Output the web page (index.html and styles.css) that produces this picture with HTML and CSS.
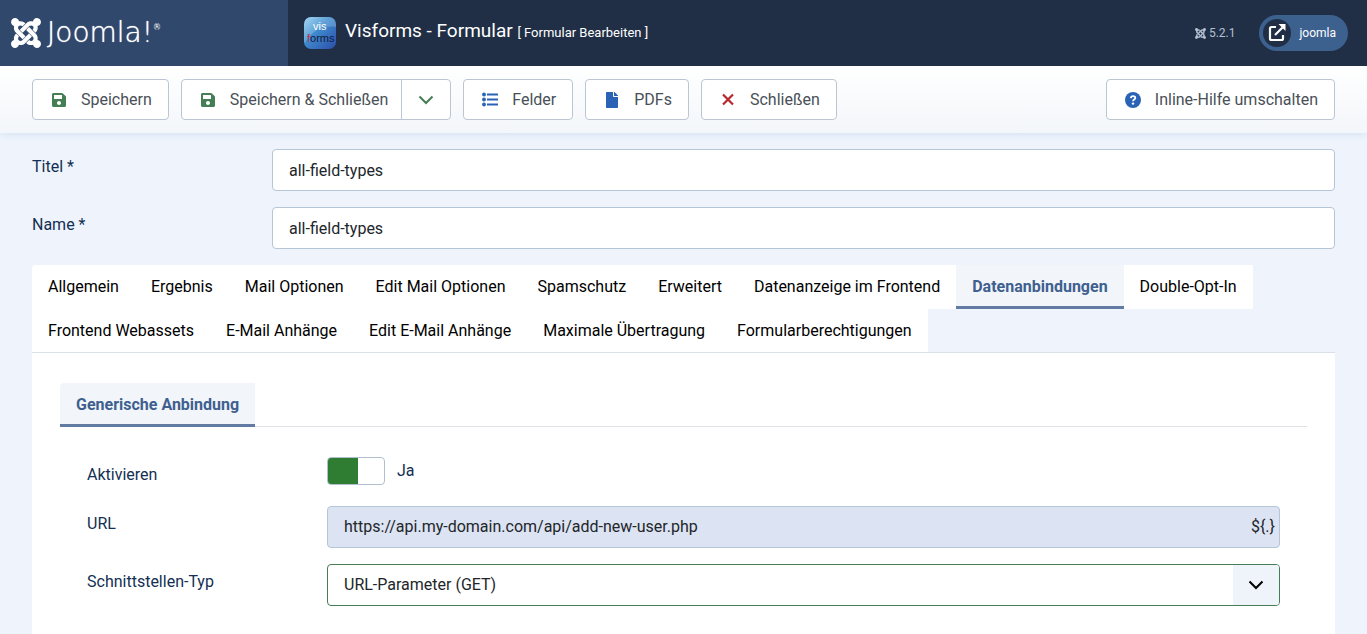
FILE: index.html
```html
<!DOCTYPE html>
<html lang="de">
<head>
<meta charset="utf-8">
<meta name="viewport" content="width=device-width, initial-scale=1">
<title>Visforms - Formular</title>
<link rel="stylesheet" href="styles.css">
</head>
<body>
<svg class="sprite" aria-hidden="true">
  <symbol id="joomla" viewBox="0 32 448 448"><path d="M.6 92.1C.6 58.8 27.4 32 60.4 32c30 0 54.5 21.9 59.2 50.2 32.6-7.6 67.1.6 96.5 30l-44.3 44.3c-20.5-20.5-42.6-16.3-55.4-3.5-14.3 14.3-14.3 37.9 0 52.2l99.5 99.5-44 44.3c-87.7-87.2-49.7-49.7-99.8-99.7-26.8-26.5-35-64.8-24.8-98.9C20.4 144.6.6 120.7.6 92.1zm129.5 116.4l44.3 44.3c10-10 89.7-89.7 99.7-99.8 14.3-14.3 37.6-14.3 51.9 0 12.8 12.8 17 35-3.5 55.4l44 44.3c31.2-31.2 38.5-67.6 28.9-101.2 29.2-4.1 51.9-29.2 51.9-59.5 0-33.2-26.8-60.1-59.8-60.1-30.3 0-55.4 22.5-59.5 51.6-33.8-9.9-71.7-1.5-98.3 25.1-18.3 19.1-71.1 71.5-99.6 99.9zm266.3 152.2c8.2-32.7-.9-68.5-26.3-93.9-11.8-12.2 5 4.7-99.5-99.7l-44.3 44.3 99.7 99.7c14.3 14.3 14.3 37.6 0 51.9-12.8 12.8-35 17-55.4-3.5l-44 44.3c27.6 30.2 68 38.8 102.7 28 5.5 27.4 29.7 48.1 58.9 48.1 33 0 59.8-26.8 59.8-60.1 0-30.2-22.5-55-51.6-59.1zm-84.3-53.1l-44-44.3c-87 86.4-50.4 50.4-99.7 99.8-14.3 14.3-37.6 14.3-51.9 0-13.1-13.4-16.9-35.3 3.2-55.4l-44-44.3c-30.2 30.2-38 65.2-29.5 98.3-26.7 6-46.2 29.9-46.2 58.2C0 453.2 26.8 480 59.8 480c28.6 0 52.5-19.8 58.6-46.7 32.7 8.2 68.5-.6 94.2-26 32.1-32 12.2-12.4 99.5-99.7z"/></symbol>
  <symbol id="save" viewBox="0 0 448 512"><path d="M433.941 129.941l-83.882-83.882A48 48 0 0 0 316.118 32H48C21.49 32 0 53.49 0 80v352c0 26.51 21.49 48 48 48h352c26.51 0 48-21.49 48-48V163.882a48 48 0 0 0-14.059-33.941zM224 416c-35.346 0-64-28.654-64-64 0-35.346 28.654-64 64-64s64 28.654 64 64c0 35.346-28.654 64-64 64zm96-304.52V212c0 6.627-5.373 12-12 12H76c-6.627 0-12-5.373-12-12V108c0-6.627 5.373-12 12-12h228.52c3.183 0 6.235 1.264 8.485 3.515l3.48 3.48A11.996 11.996 0 0 1 320 111.48z"/></symbol>
  <symbol id="chevron" viewBox="0 0 16 16"><path d="M1.500 4.500 8 11l6.500-6.500" fill="none" stroke="currentColor" stroke-width="2"/></symbol>
</svg>

<header class="header">
  <a class="brand" href="#" aria-label="Joomla!">
    <svg class="brand-mark"><use href="#joomla"/></svg>
    <span class="brand-name">Joomla!<sup>®</sup></span>
  </a>
  <div class="header-main">
    <svg class="app-icon" viewBox="0 0 32 32" aria-hidden="true">
      <defs>
        <linearGradient id="app-bg" x1="0" y1="0" x2="1" y2="1"><stop offset="0" stop-color="#8fcdf0"/><stop offset=".4" stop-color="#3f8dd0"/><stop offset="1" stop-color="#2c4da8"/></linearGradient>
      </defs>
      <rect width="32" height="32" rx="7" fill="url(#app-bg)"/>
      <path d="M7 0h18a7 7 0 0 1 7 7v3C20 8 8 13 1 26L0 24V7a7 7 0 0 1 7-7z" fill="#fff" opacity=".18"/>
      <text class="app-text" x="9" y="13" fill="#fff">vis</text>
      <text class="app-text" x="3" y="25" fill="#101a3a"><tspan fill="#c8283c">f</tspan>orms</text>
    </svg>
    <h1 class="title">Visforms - Formular <small>[ Formular Bearbeiten ]</small></h1>
    <div class="version"><svg class="version-icon" aria-hidden="true"><use href="#joomla"/></svg>5.2.1</div>
    <a class="site-link" href="#">
      <span class="site-icon"><svg viewBox="0 0 18 18" aria-hidden="true"><path d="M8 3H3.500Q2 3 2 4.500v10Q2 16 3.500 16h10q1.500 0 1.500-1.500V11M7 11l7.500-7.500" fill="none" stroke="#fff" stroke-width="2.200"/><path d="M10.500 0H17.500V7z" fill="#fff"/></svg></span>
      joomla
    </a>
  </div>
</header>

<div class="toolbar">
  <button class="btn green" type="button"><svg class="icon"><use href="#save"/></svg><span>Speichern</span></button>
  <div class="btn-group">
    <button class="btn green" type="button"><svg class="icon"><use href="#save"/></svg><span>Speichern &amp; Schließen</span></button>
    <button class="btn btn-toggle green" type="button" aria-label="Weitere Aktionen"><svg class="icon"><use href="#chevron"/></svg></button>
  </div>
  <button class="btn blue" type="button"><svg class="icon" viewBox="0 0 16 16"><g fill="currentColor"><circle cx="2" cy="2.500" r="1.900"/><circle cx="2" cy="7.500" r="1.900"/><circle cx="2" cy="12.500" r="1.900"/><path d="M5 1.500h11v2H5zM5 6.500h11v2H5zM5 11.500h11v2H5z"/></g></svg><span>Felder</span></button>
  <button class="btn blue" type="button"><svg class="icon" viewBox="0 0 384 512"><path d="M224 136V0H24C10.700 0 0 10.700 0 24v464c0 13.300 10.700 24 24 24h336c13.300 0 24-10.700 24-24V160H248c-13.200 0-24-10.800-24-24zm160-14.100v6.100H256V0h6.100c6.400 0 12.500 2.500 17 7l97.900 98c4.500 4.500 7 10.600 7 16.900z"/></svg><span>PDFs</span></button>
  <button class="btn red" type="button"><svg class="icon" viewBox="0 0 16 16"><path d="m3 2.500 10 10m0-10-10 10" stroke="currentColor" stroke-width="2.200"/></svg><span>Schließen</span></button>
  <button class="btn blue btn-help" type="button"><svg class="icon" viewBox="0 0 16 16"><circle cx="8" cy="8" r="8"/><path d="M5.800 6.100C6 4.700 6.900 4.200 8 4.200c1.300 0 2.300.7 2.300 1.800C10.300 7.500 8 7.600 8 9.300" fill="none" stroke="#fff" stroke-width="1.800"/><circle cx="8" cy="11.600" r="1.200" fill="#fff"/></svg><span>Inline-Hilfe umschalten</span></button>
</div>

<main class="content">
  <form>
    <div class="row"><label for="title">Titel *</label><input class="control" id="title" type="text" value="all-field-types"></div>
    <div class="row"><label for="name">Name *</label><input class="control" id="name" type="text" value="all-field-types"></div>

    <div class="tabs" role="tablist">
      <button class="tab" type="button" role="tab">Allgemein</button>
      <button class="tab" type="button" role="tab">Ergebnis</button>
      <button class="tab" type="button" role="tab">Mail Optionen</button>
      <button class="tab" type="button" role="tab">Edit Mail Optionen</button>
      <button class="tab" type="button" role="tab">Spamschutz</button>
      <button class="tab" type="button" role="tab">Erweitert</button>
      <button class="tab" type="button" role="tab">Datenanzeige im Frontend</button>
      <button class="tab active" type="button" role="tab" aria-selected="true">Datenanbindungen</button>
      <button class="tab" type="button" role="tab">Double-Opt-In</button>
      <button class="tab" type="button" role="tab">Frontend Webassets</button>
      <button class="tab" type="button" role="tab">E-Mail Anhänge</button>
      <button class="tab" type="button" role="tab">Edit E-Mail Anhänge</button>
      <button class="tab" type="button" role="tab">Maximale Übertragung</button>
      <button class="tab" type="button" role="tab">Formularberechtigungen</button>
    </div>

    <div class="panel">
      <div class="tabs" role="tablist">
        <button class="tab active" type="button" role="tab" aria-selected="true">Generische Anbindung</button>
      </div>
      <div class="subpanel">
        <div class="row row-switch">
          <label for="enable">Aktivieren</label>
          <div class="switch-wrap"><input class="switch" id="enable" type="checkbox" role="switch" checked><span>Ja</span></div>
        </div>
        <div class="row">
          <label for="url">URL</label>
          <div class="control readonly"><input id="url" type="text" value="https://api.my-domain.com/api/add-new-user.php" readonly><span>${.}</span></div>
        </div>
        <div class="row">
          <label for="type">Schnittstellen-Typ</label>
          <div class="select-wrap">
            <select class="control select" id="type"><option>URL-Parameter (GET)</option></select>
            <span class="select-arrow"><svg class="icon"><use href="#chevron"/></svg></span>
          </div>
        </div>
      </div>
    </div>
  </form>
</main>
</body>
</html>
```
FILE: styles.css
```css
* { box-sizing: border-box; }

body {
  margin: 0;
  background: #eff4fc;
  color: #132f53;
  font: 16px/24px Roboto, "Liberation Sans", sans-serif;
}

button, input, select { font: inherit; }
.sprite { display: none; }

/* Header */
.header { position: relative; display: flex; min-height: 66px; background: #202f45; color: #fff; }
.brand {
  display: flex;
  flex: 0 0 288px;
  align-items: center;
  gap: 6px;
  padding-left: 11px;
  background: #2f486b;
  color: #fff;
  text-decoration: none;
}
.brand-mark { width: 30px; height: 30px; fill: currentColor; }
.brand-name {
  font: 200 28px/32px "DejaVu Sans Light", "DejaVu Sans", sans-serif;
  text-shadow: 0 0 1px #fff;
}
.brand-name sup { font-size: 8px; line-height: 8px; vertical-align: 12px; }
.header-main { display: flex; flex: 1; align-items: center; padding: 0 19px 0 16px; }
.app-icon { width: 32px; height: 32px; margin-right: 9px; }
.app-text { font: 11px "Liberation Sans", sans-serif; }
.title { flex: 1; margin: 0; padding-bottom: 2px; font-size: 19px; font-weight: 400; line-height: 24px; }
.title small { font-size: 13px; }
.version {
  display: flex;
  align-items: center;
  gap: 3px;
  margin-right: 24px;
  color: #b3c0d2;
  font-size: 12px;
}
.version-icon { width: 11px; height: 11px; fill: currentColor; }
.site-link {
  display: flex;
  align-items: center;
  gap: 8px;
  padding: 4px 12px 4px 4px;
  border-radius: 18px;
  background: #3d618f;
  color: #fff;
  font-size: 12px;
  text-decoration: none;
}
.site-icon {
  display: grid;
  place-items: center;
  width: 28px;
  height: 28px;
  border-radius: 50%;
  background: #202f45;
}
.site-icon svg { width: 18px; height: 18px; }

/* Toolbar */
.toolbar {
  display: flex;
  flex-wrap: wrap;
  gap: 12px;
  padding: 13px 32px;
  background: linear-gradient(#fff, #f3f6fa);
  box-shadow: 0 1px 8px #d3dfef;
}
.btn {
  display: flex;
  align-items: center;
  gap: 14px;
  min-height: 41px;
  padding: 0 16px 0 18px;
  border: 1px solid #bcc6d3;
  border-radius: 4px;
  background: #fff;
  color: #495057;
}
.icon { width: 16px; height: 16px; fill: currentColor; }
.green .icon { color: #457d54; }
.blue .icon { color: #2a63b5; }
.red .icon { color: #b8282d; }
.btn-group { display: flex; }
.btn-group .btn:first-child { padding-right: 13px; border-radius: 4px 0 0 4px; }
.btn-group .btn-toggle { margin-left: -1px; padding: 0 16px; border-radius: 0 4px 4px 0; }
.btn-help { margin-left: auto; }

/* Form */
.content { padding: 16px 32px 0; }
.row { display: grid; grid-template-columns: 240px 1fr; margin-bottom: 16px; }
.row label { padding-top: 6px; }
.control {
  width: 100%;
  height: 42px;
  padding: 0 16px;
  border: 1px solid #b5c6d9;
  border-radius: 4px;
  background: #fff;
  color: #22262a;
}

/* Tabs */
.tabs { display: flex; flex-wrap: wrap; }
.tab {
  padding: 10px 16px 7px;
  border: 0;
  border-bottom: 3px solid transparent;
  background: #fff;
  color: #000;
}
.tab.active { border-bottom-color: #617ba3; background: #f2f6fa; color: #3f608f; font-weight: 700; }
.tabs > :first-child { border-top-left-radius: 4px; }

.panel {
  position: relative;
  margin-top: -1px;
  padding: 30px 28px 12px;
  border-top: 1px solid #d9e0ea;
  background: #fff;
}
.subpanel { margin-top: -1px; padding: 30px 27px 0; border-top: 1px solid #dee2e6; }

.row-switch { margin-bottom: 19px; }
.switch-wrap { display: flex; align-items: center; gap: 12px; height: 28px; }
.switch {
  width: 58px;
  height: 28px;
  margin: 0;
  border: 1px solid #b0bfd0;
  border-radius: 4px;
  appearance: none;
  background: #fff;
}
.switch:checked { background: linear-gradient(90deg, #2f7d32 30px, #fff 30px); }
.readonly { display: flex; align-items: center; padding-right: 4px; background: #dce3f2; }
.readonly input { flex: 1; min-width: 0; padding: 0; border: 0; background: none; color: inherit; outline: 0; }
.select-wrap { position: relative; }
.select { border-color: #457d54; appearance: none; }
.select-arrow {
  position: absolute;
  top: 1px;
  right: 1px;
  bottom: 1px;
  display: grid;
  place-items: center;
  width: 46px;
  border-radius: 0 3px 3px 0;
  background: #eff4fa;
  color: #000;
  pointer-events: none;
}
```
